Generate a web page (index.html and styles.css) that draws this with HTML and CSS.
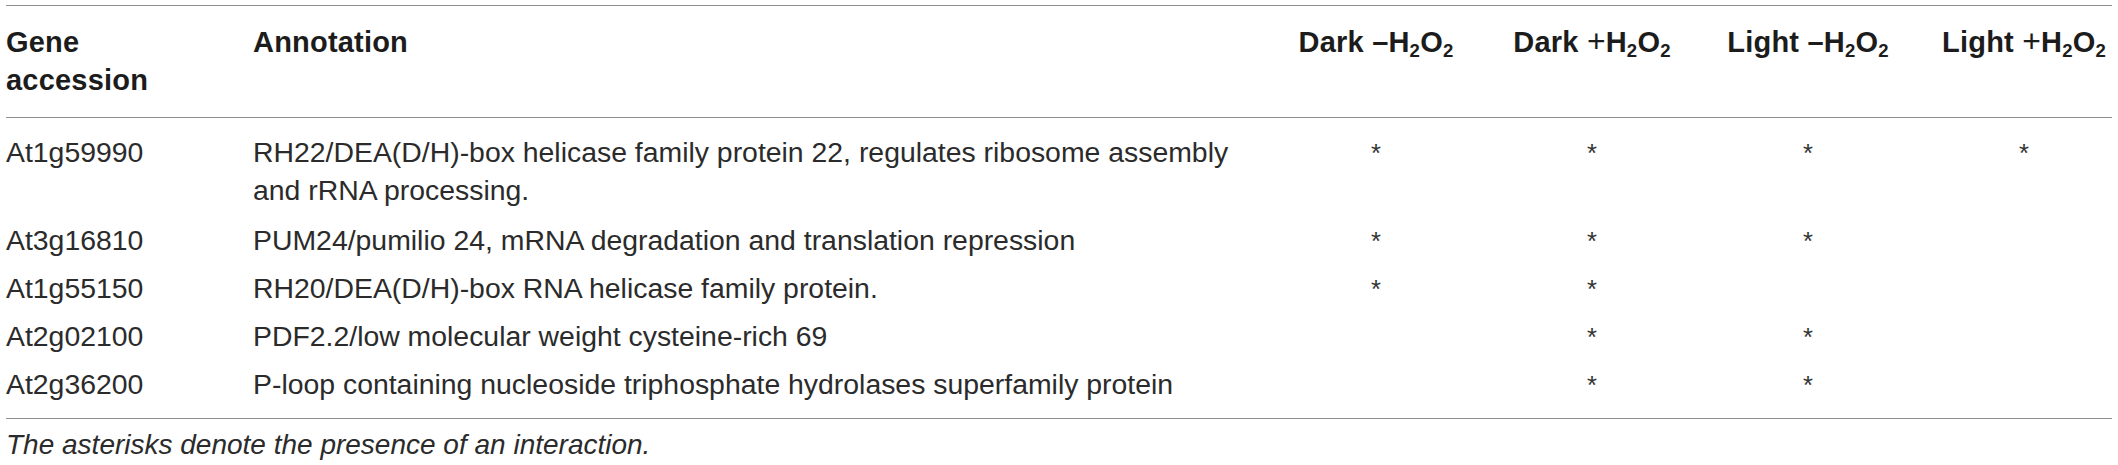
FILE: index.html
```html
<!DOCTYPE html>
<html lang="en">
<head>
<meta charset="utf-8">
<title>Interaction table</title>
<link rel="stylesheet" href="styles.css">
</head>
<body>
<div class="wrap">
<table class="tbl">
  <colgroup>
    <col class="c-gene">
    <col class="c-ann">
    <col class="c-val">
    <col class="c-val">
    <col class="c-val">
    <col class="c-last">
  </colgroup>
  <thead>
    <tr>
      <th class="left">Gene accession</th>
      <th class="left">Annotation</th>
      <th class="mid">Dark –H<sub>2</sub>O<sub>2</sub></th>
      <th class="mid">Dark <span class="plus">+</span>H<sub>2</sub>O<sub>2</sub></th>
      <th class="mid">Light –H<sub>2</sub>O<sub>2</sub></th>
      <th class="mid last">Light <span class="plus">+</span>H<sub>2</sub>O<sub>2</sub></th>
    </tr>
  </thead>
  <tbody>
    <tr class="first">
      <td>At1g59990</td>
      <td>RH22/DEA(D/H)-box helicase family protein 22, regulates ribosome assembly<br>and rRNA processing.</td>
      <td class="mid"><span class="ast">*</span></td>
      <td class="mid"><span class="ast">*</span></td>
      <td class="mid"><span class="ast">*</span></td>
      <td class="mid last"><span class="ast">*</span></td>
    </tr>
    <tr>
      <td>At3g16810</td>
      <td>PUM24/pumilio 24, mRNA degradation and translation repression</td>
      <td class="mid"><span class="ast">*</span></td>
      <td class="mid"><span class="ast">*</span></td>
      <td class="mid"><span class="ast">*</span></td>
      <td class="mid last"></td>
    </tr>
    <tr>
      <td>At1g55150</td>
      <td>RH20/DEA(D/H)-box RNA helicase family protein.</td>
      <td class="mid"><span class="ast">*</span></td>
      <td class="mid"><span class="ast">*</span></td>
      <td class="mid"></td>
      <td class="mid last"></td>
    </tr>
    <tr>
      <td>At2g02100</td>
      <td>PDF2.2/low molecular weight cysteine-rich 69</td>
      <td class="mid"></td>
      <td class="mid"><span class="ast">*</span></td>
      <td class="mid"><span class="ast">*</span></td>
      <td class="mid last"></td>
    </tr>
    <tr class="final">
      <td>At2g36200</td>
      <td>P-loop containing nucleoside triphosphate hydrolases superfamily protein</td>
      <td class="mid"></td>
      <td class="mid"><span class="ast">*</span></td>
      <td class="mid"><span class="ast">*</span></td>
      <td class="mid last"></td>
    </tr>
  </tbody>
</table>
<p class="note">The asterisks denote the presence of an interaction.</p>
</div>
</body>
</html>
```

FILE: styles.css
```css
html, body {
  margin: 0;
  padding: 0;
  background: #ffffff;
}

body {
  font-family: "Liberation Sans", Arial, Helvetica, sans-serif;
  color: #2b2b2b;
}

.wrap {
  padding: 5px 6px 0 6px;
  width: 2106px;
}

.tbl {
  width: 2106px;
  table-layout: fixed;
  border-collapse: collapse;
  font-size: 28.4px;
  line-height: 38px;
}

.c-gene { width: 247px; }
.c-ann { width: 1035px; }
.c-val { width: 216px; }
.c-last { width: 176px; }

.tbl th,
.tbl td {
  padding: 5px 40px 4px 0;
  vertical-align: top;
  text-align: left;
}

.tbl th {
  font-size: 29px;
  font-weight: 700;
  color: #1c1c1c;
  border-top: 1px solid #8f8f8f;
  border-bottom: 1px solid #8f8f8f;
  padding-top: 17px;
  padding-bottom: 18px;
  letter-spacing: 0.2px;
}

.tbl .mid {
  text-align: center;
}

.tbl .last {
  padding-right: 0;
}

.tbl tr.first td {
  padding-top: 15px;
  padding-bottom: 7px;
}

.tbl tr.final td {
  padding-bottom: 14px;
  border-bottom: 1px solid #8f8f8f;
}

.tbl sub {
  font-size: 0.64em;
  line-height: 0;
  vertical-align: -0.26em;
}

.plus {
  font-weight: 400;
  font-size: 1.1em;
  line-height: 0;
}

.ast {
  font-size: 0.9em;
  color: #333333;
}

.note {
  margin: 0;
  padding-top: 7px;
  font-size: 28px;
  line-height: 38px;
  font-style: italic;
  color: #2b2b2b;
}
```
